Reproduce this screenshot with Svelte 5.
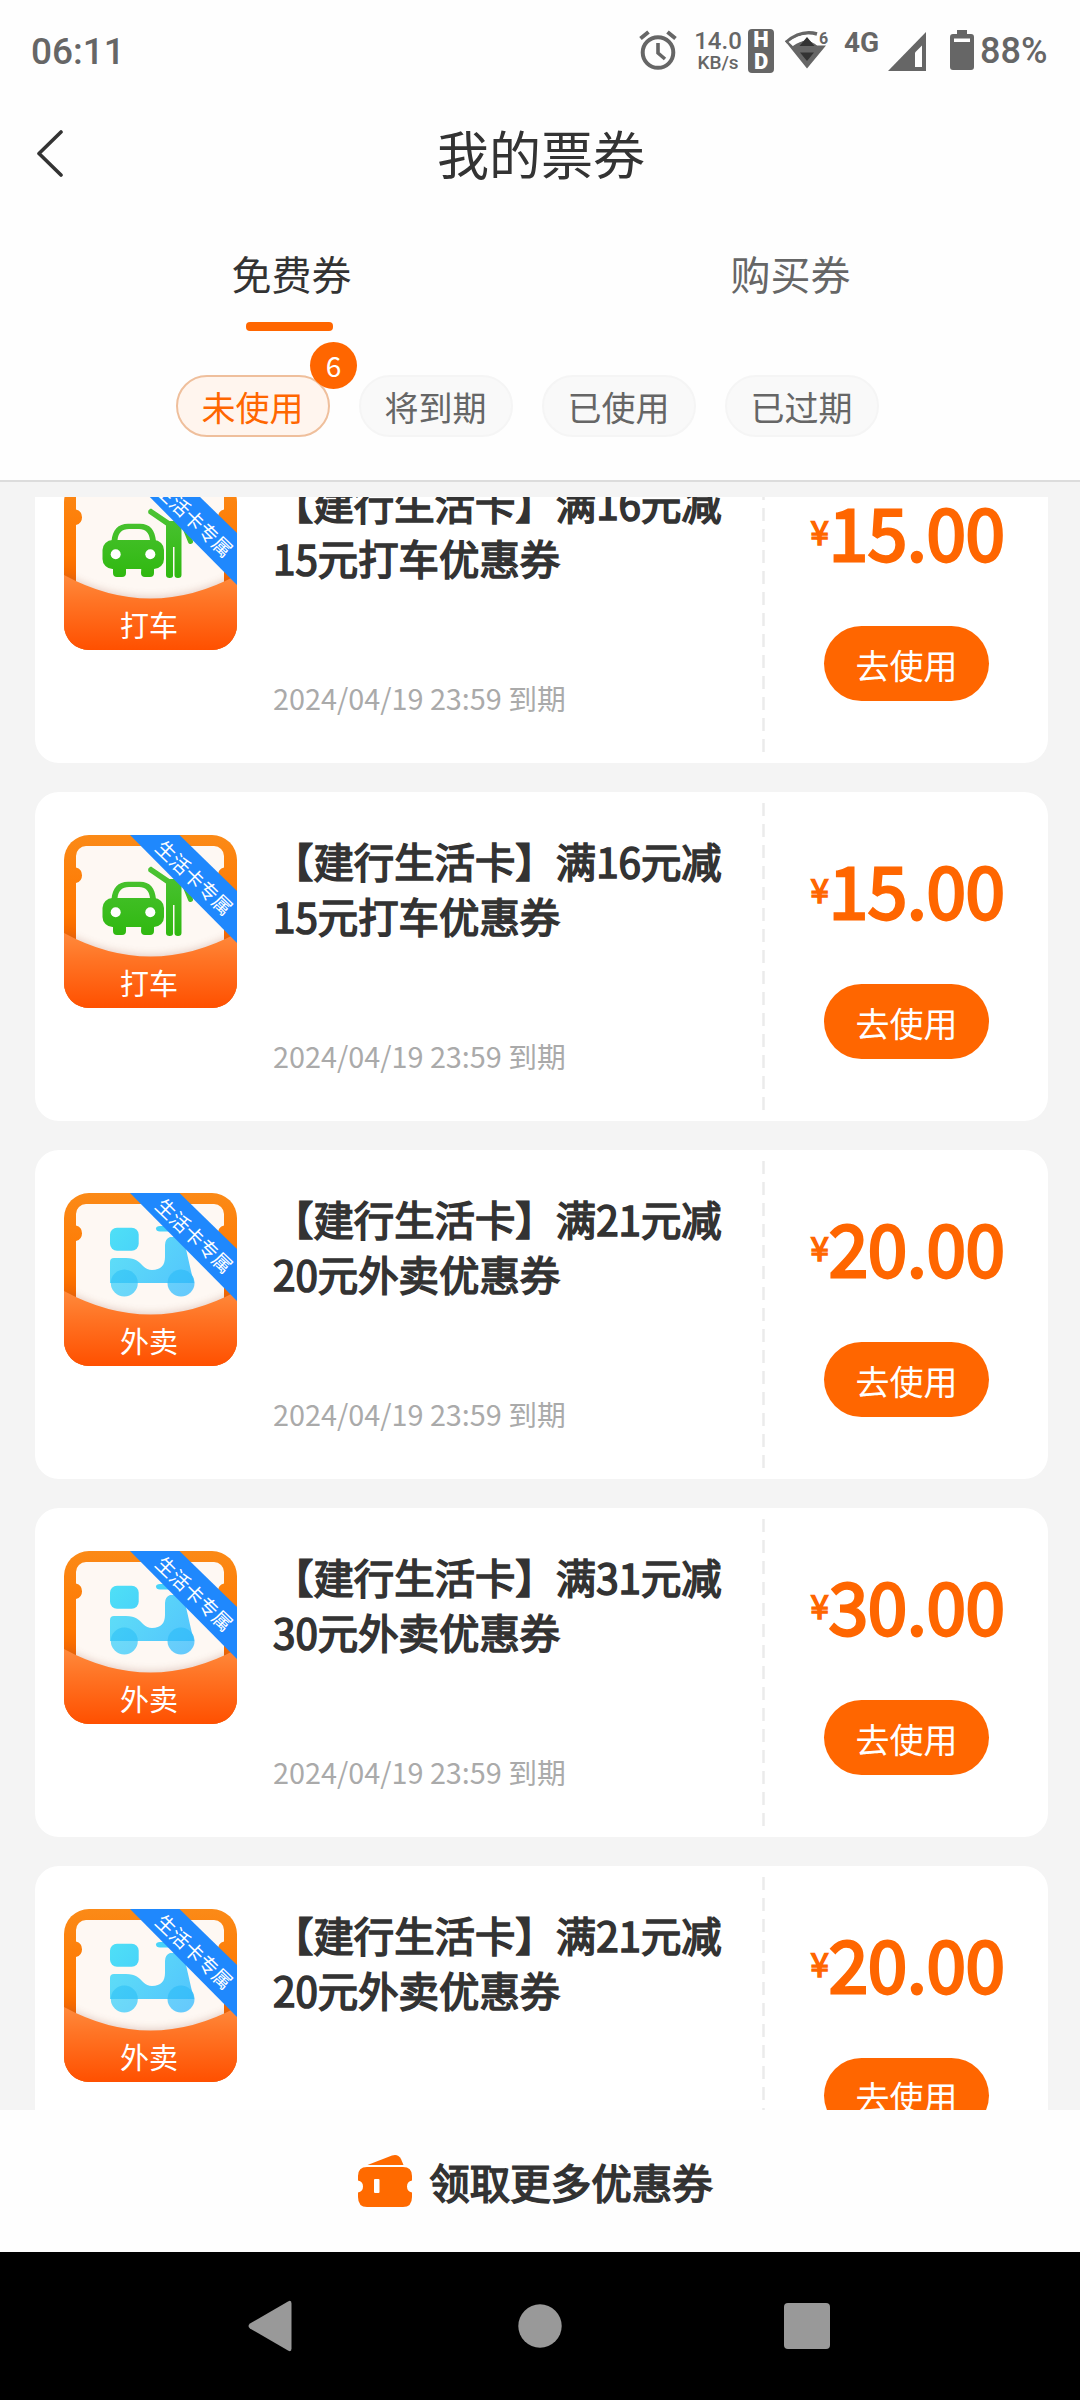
<script lang="ts">
    type Kind = 'taxi' | 'food';

    interface Coupon {
        kind: Kind;
        title: string;
        expires: string;
        amount: string;
    }

    const labels: Record<Kind, string> = { taxi: '打车', food: '外卖' };

    const tabs = ['免费券', '购买券'];
    const filters = ['未使用', '将到期', '已使用', '已过期'];
    const unusedCount = 6;

    const coupons: Coupon[] = [
        { kind: 'taxi', title: '【建行生活卡】满16元减15元打车优惠券', expires: '2024/04/19 23:59', amount: '15.00' },
        { kind: 'taxi', title: '【建行生活卡】满16元减15元打车优惠券', expires: '2024/04/19 23:59', amount: '15.00' },
        { kind: 'food', title: '【建行生活卡】满21元减20元外卖优惠券', expires: '2024/04/19 23:59', amount: '20.00' },
        { kind: 'food', title: '【建行生活卡】满31元减30元外卖优惠券', expires: '2024/04/19 23:59', amount: '30.00' },
        { kind: 'food', title: '【建行生活卡】满21元减20元外卖优惠券', expires: '2024/04/19 23:59', amount: '20.00' },
    ];

    let activeTab = $state(0);
    let activeFilter = $state(0);
</script>

<svg class="defs" width="0" height="0" aria-hidden="true">
    <defs>
        <linearGradient id="back" x1="0" y1="0" x2="0" y2="1">
            <stop offset="0" stop-color="#fb8a17" />
            <stop offset="0.45" stop-color="#ff7700" />
            <stop offset="0.65" stop-color="#ee5f00" />
        </linearGradient>
        <linearGradient id="pocket" x1="0" y1="0" x2="0" y2="1">
            <stop offset="0" stop-color="#ff8a3c" />
            <stop offset="0.35" stop-color="#ff7425" />
            <stop offset="1" stop-color="#ff5000" />
        </linearGradient>
        <linearGradient id="green" gradientUnits="userSpaceOnUse" x1="0" y1="34" x2="0" y2="102">
            <stop offset="0" stop-color="#4cc334" />
            <stop offset="1" stop-color="#2fb80f" />
        </linearGradient>
        <linearGradient id="cyan" gradientUnits="userSpaceOnUse" x1="46" y1="34" x2="130" y2="104">
            <stop offset="0" stop-color="#4fe0f6" />
            <stop offset="1" stop-color="#3ebcff" />
        </linearGradient>
        <clipPath id="rounded"><rect width="173" height="173" rx="25" /></clipPath>
        <filter id="soft" x="-20%" y="-20%" width="140%" height="140%">
            <feGaussianBlur stdDeviation="4" />
        </filter>
    </defs>
</svg>

<div class="screen">
    <div class="status">
        <span class="time">06:11</span>
        <svg class="alarm" width="38" height="40" viewBox="0 0 38 40" fill="none" stroke="#666">
            <circle cx="19" cy="22.5" r="15.3" stroke-width="4" />
            <path d="M19 13v10l7 6" stroke-width="3.6" />
            <path d="M1.500 8.500l8-6.500M36.500 8.500l-8-6.500" stroke-width="4" />
        </svg>
        <div class="speed">
            <span class="rate">14.0</span>
            <span class="unit">KB/s</span>
        </div>
        <div class="hd"><span>H</span><span>D</span></div>
        <svg class="wifi" width="46" height="42" viewBox="0 0 46 42">
            <path d="M2 12.500Q17 -.5 33 4" fill="none" stroke="#666" stroke-width="3.500" />
            <path d="M1 11l22 27.500L42 15.500H33L23 9l-14 7-5-6z" fill="#666" />
            <path d="M4.500 12Q17 2.500 30 5.500V14L23 9l-14 7z" fill="#fff" />
            <path d="M9 16q14-10 24 0z" fill="#666" />
            <path d="M23 7l7.500 9h-15zM16 22.500h14l-7 8.500z" fill="#333" />
            <text x="35" y="13.500" class="wifi-gen">6</text>
        </svg>
        <span class="network">4G</span>
        <svg class="signal" width="38" height="39" viewBox="0 0 38 39">
            <path d="M38 0v39H0z" fill="#666" />
            <path d="M34 13.500V35h-7V20.500z" fill="#fff" />
        </svg>
        <svg class="battery" width="24" height="40" viewBox="0 0 24 40">
            <path d="M7 0h10v4h4q3 0 3 3v30q0 3-3 3H3q-3 0-3-3V7q0-3 3-3h4z" fill="#666" />
            <path d="M4 8.500h16v3.500H4z" fill="#fff" />
        </svg>
        <span class="percent">88%</span>
    </div>

    <header>
        <svg class="back" width="28" height="48" viewBox="0 0 28 48" fill="none" stroke="#333" stroke-width="3.600" stroke-linecap="round" stroke-linejoin="round">
            <path d="M25 3L3 24.500 25 46" />
        </svg>
        <h1>我的票券</h1>
    </header>

    <nav class="tabs">
        {#each tabs as tab, i}
            <button class="tab" class:active={activeTab === i} onclick={() => (activeTab = i)}>{tab}</button>
        {/each}
    </nav>

    <div class="filters">
        {#each filters as filter, i}
            <button class="filter" class:active={activeFilter === i} onclick={() => (activeFilter = i)}>
                {filter}
                {#if i === 0}
                    <span class="badge">{unusedCount}</span>
                {/if}
            </button>
        {/each}
    </div>

    <main>
        <div class="list">
            {#each coupons as coupon}
                <article class="card">
                    <svg class="icon" width="173" height="173" viewBox="0 0 173 173">
                        <g clip-path="url(#rounded)">
                            <rect width="173" height="173" fill="url(#back)" />
                            <path
                                d="M22 11H150a10 10 0 0 1 10 10V32.500a8 8 0 0 0 0 15.500V125H12V48a8 8 0 0 0 0-15.500V21A10 10 0 0 1 22 11z"
                                fill="#fef8f3"
                            />
                            {#if coupon.kind === 'taxi'}
                                <g fill="url(#green)">
                                    <path d="M47.500 66V64C48.500 53 54 46.700 64 46.700H76C86 46.700 91 53 92 64V66H86V63C85 55.500 81.500 52 75 52H65C58 52 54.500 55.500 53.500 63V66z" />
                                    <rect x="38.500" y="63" width="61.500" height="29" rx="10" />
                                    <path d="M49 88h13v8q0 4-4 4h-5q-4 0-4-4zM77.500 88h12.500v8q0 4-4 4h-5q-4 0-4-4z" />
                                    <path d="M87 31.500q-4 1.500-2.500 5l17.500 12V98q0 3 3.700 3t3.300-3V70h1.500v28q0 3 3.500 3t3.500-3V44h-12z" />
                                </g>
                                <path d="M119 46l7.500 18.500" stroke="#45bf2b" stroke-width="5" stroke-linecap="round" />
                                <circle cx="51.700" cy="77.300" r="5" fill="#fff" />
                                <circle cx="86.300" cy="77.300" r="5" fill="#fff" />
                            {:else}
                                <g fill="url(#cyan)">
                                    <rect x="46" y="34.700" width="28.700" height="23" rx="7" />
                                    <path d="M92 35.500q0-2.500 4-2.500h12v5.500H96q-4 0-4-3z" />
                                    <path d="M46 90V69q0-4 4-4h12c10 0 13 4 17 8q4 4 9 4c9 0 13-5 13-13V52q0-6 5-8h13l3 12 5 22 3 12z" opacity="0.9" />
                                    <circle cx="60.300" cy="90" r="13.500" opacity="0.8" />
                                    <circle cx="117" cy="90" r="13.500" opacity="0.8" />
                                </g>
                                <path d="M46.800 90a13.500 13.500 0 0 1 27 0zM103.500 90a13.500 13.500 0 0 1 26-5l1 5z" fill="#27b6f3" opacity="0.35" />
                            {/if}
                            <path d="M0 98Q86.500 143 173 98V173H0z" fill="#9a5a48" opacity="0.3" filter="url(#soft)" />
                            <path d="M0 98Q86.500 145 173 98V173H0z" fill="url(#pocket)" />
                            <path d="M66 0H115.500L173 56V108z" fill="#1f88fd" />
                        </g>
                        <text class="ribbon" transform="translate(130 43) rotate(44)" y="7">生活卡专属</text>
                        <text class="kind" x="85" y="159.500">{labels[coupon.kind]}</text>
                    </svg>
                    <div class="info">
                        <h2>{coupon.title}</h2>
                        <p>{coupon.expires} 到期</p>
                    </div>
                    <svg class="divider" width="3" height="307" viewBox="0 0 3 307">
                        <path d="M1.500 0V307" stroke="#ebebeb" stroke-width="2.500" stroke-dasharray="13 8" />
                    </svg>
                    <div class="action">
                        <div class="price"><span class="yen">¥</span><span class="amount">{coupon.amount}</span></div>
                        <button class="use">去使用</button>
                    </div>
                </article>
            {/each}
        </div>
    </main>

    <footer>
        <svg width="56" height="54" viewBox="0 0 56 54" fill="#ff6a00">
            <path d="M10.500 11L35 1.500q6-2 9 3.500l2.500 6z" />
            <path d="M10 13H46q9 0 9 9v4.500q-5 1-5 6t5 6V43q0 10-9 10H10Q1 53 1 43V38.500q5-1 5-6t-5-6V22q0-9 9-9z" />
            <rect x="17" y="25" width="5.500" height="14" rx="1" fill="#fff" />
        </svg>
        <span>领取更多优惠券</span>
    </footer>

    <div class="navbar">
        <svg width="44" height="52" viewBox="0 0 44 52"><path d="M40 1.500q3.500-2 3.500 2v45q0 4-3.500 2L2 28.500q-3-2.500 0-5z" fill="#999" /></svg>
        <svg class="home" width="44" height="44" viewBox="0 0 44 44"><circle cx="22" cy="22" r="21.700" fill="#999" /></svg>
        <svg width="46" height="46" viewBox="0 0 46 46"><rect width="46" height="46" rx="4" fill="#999" /></svg>
    </div>
</div>

<style>
    :global(body) {
        margin: 0;
        background: #fff;
    }

    .defs {
        display: block;
    }

    .screen {
        display: flex;
        flex-direction: column;
        width: 1080px;
        height: 2400px;
        overflow: hidden;
        background: #fefefe;
        color: #333;
        font-family: 'Noto Sans CJK SC', sans-serif;
    }

    button {
        padding: 0;
        border: none;
        background: none;
        color: inherit;
        font: inherit;
    }

    h1, h2, p {
        margin: 0;
    }

    svg {
        flex: none;
    }

    /* status bar */
    .status {
        display: flex;
        align-items: center;
        height: 102px;
        padding: 0 32px 0 31px;
        box-sizing: border-box;
        color: #666;
        font-family: Roboto, sans-serif;
        white-space: nowrap;
    }

    .time {
        flex: 1;
        font-size: 37px;
        font-weight: 500;
    }

    .alarm {
        margin: 0 17px 2px 0;
    }

    .speed {
        display: flex;
        flex-direction: column;
        align-items: center;
        width: 48px;
        margin-right: 6px;
        font-weight: 500;
    }

    .rate {
        font-size: 24px;
        line-height: 24px;
    }

    .unit {
        font-size: 19px;
        line-height: 20px;
    }

    .hd {
        display: flex;
        flex-direction: column;
        align-items: center;
        width: 26px;
        height: 44px;
        margin-right: 10px;
        border-radius: 4px;
        background: #666;
        color: #fff;
        font-size: 22px;
        font-weight: 900;
        line-height: 22px;
    }

    .wifi {
        overflow: visible;
    }

    .wifi-gen {
        fill: #666;
        font-size: 16px;
        font-weight: 700;
    }

    .network {
        width: 39px;
        margin: 0 5px 18px 14px;
        font-size: 28px;
        font-weight: 700;
    }

    .battery {
        margin: 0 6px 2px 24px;
    }

    .percent {
        width: 68px;
        font-size: 36px;
        font-weight: 500;
    }

    /* title */
    header {
        display: grid;
        grid-template-columns: 100px 1fr 98px;
        align-items: center;
        height: 101px;
        margin-bottom: 3px;
    }

    .back {
        margin-left: 36px;
    }

    h1 {
        font-size: 52px;
        font-weight: 400;
        line-height: 101px;
        text-align: center;
    }

    /* tabs */
    .tabs {
        display: flex;
        height: 125px;
        padding: 0 40px 0 42px;
    }

    .tab {
        display: flex;
        flex: 1;
        flex-direction: column;
        align-items: center;
        height: 125px;
        color: #666;
        font-size: 40px;
        line-height: 135px;
    }

    .tab.active {
        color: #333;
    }

    .tab.active::after {
        content: '';
        width: 87px;
        height: 9px;
        margin: -19px 5px 0 0;
        border-radius: 4px;
        background: #ff6600;
    }

    .filters {
        display: flex;
        gap: 29px;
        height: 151px;
        padding: 44px 0 0 176px;
        box-sizing: border-box;
        border-bottom: 2px solid #dcdcdc;
    }

    .filter {
        position: relative;
        width: 154px;
        height: 62px;
        padding: 2px 1px 0 0;
        border: 2px solid #f5f5f5;
        border-radius: 31px;
        box-sizing: border-box;
        background: #f9f9f9;
        color: #666;
        font-size: 34px;
        line-height: 56px;
    }

    .filter.active {
        border-color: #efbf9c;
        background: #fff5ee;
        color: #ff6600;
    }

    .badge {
        position: absolute;
        top: -35px;
        right: -29px;
        width: 47px;
        height: 47px;
        border-radius: 50%;
        background: #ff6600;
        color: #fff;
        font-size: 28px;
        line-height: 47px;
        text-align: center;
    }

    /* coupons */
    main {
        flex: 1;
        min-height: 0;
        padding: 15px 32px 0 35px;
        background: #f4f4f4;
    }

    .list {
        display: flex;
        flex-direction: column;
        justify-content: flex-end;
        gap: 29px;
        height: 1613px;
        overflow: hidden;
    }

    /* the list is scrolled, so its last card runs under the footer */
    .card:last-child {
        margin-bottom: -85px;
    }

    .card {
        display: flex;
        flex: none;
        height: 329px;
        border-radius: 24px;
        background: #fff;
    }

    .icon {
        margin: 43px 0 0 29px;
    }

    .ribbon,
    .kind {
        fill: #fff;
        text-anchor: middle;
    }

    .ribbon {
        font-size: 19.500px;
    }

    .kind {
        font-size: 29px;
    }

    .info {
        width: 455px;
        margin: 41px 0 0 36px;
    }

    h2 {
        height: 191px;
        font-size: 40.400px;
        font-weight: 400;
        line-height: 55px;
        -webkit-text-stroke: 1.600px #333;
    }

    p {
        color: #aaa;
        font-size: 28.800px;
        line-height: 64px;
    }

    .divider {
        margin: 11px 0 0 34px;
    }

    .action {
        display: flex;
        flex: 1;
        flex-direction: column;
        align-items: center;
    }

    .price {
        display: flex;
        align-items: flex-start;
        height: 155px;
        margin-top: 37px;
        padding-left: 2px;
        color: #ff6600;
        -webkit-text-stroke: 2.800px #ff6600;
    }

    .yen {
        font-size: 33px;
        line-height: 120px;
        -webkit-text-stroke-width: 1.500px;
    }

    .amount {
        font-size: 71px;
        line-height: 118px;
        letter-spacing: -0.300px;
    }

    .use {
        width: 165px;
        height: 75px;
        padding-top: 2px;
        border-radius: 38px;
        background: #ff6600;
        color: #fff;
        font-size: 34px;
        line-height: 73px;
    }

    footer {
        display: flex;
        align-items: center;
        justify-content: center;
        gap: 16px;
        height: 142px;
        padding-right: 10px;
        font-size: 40.500px;
    }

    footer span {
        -webkit-text-stroke: 1.600px #333;
    }

    .navbar {
        display: flex;
        align-items: center;
        justify-content: space-between;
        height: 148px;
        padding: 0 250px 0 248px;
        background: #000;
    }

    .home {
        margin-left: 4px;
    }
</style>
